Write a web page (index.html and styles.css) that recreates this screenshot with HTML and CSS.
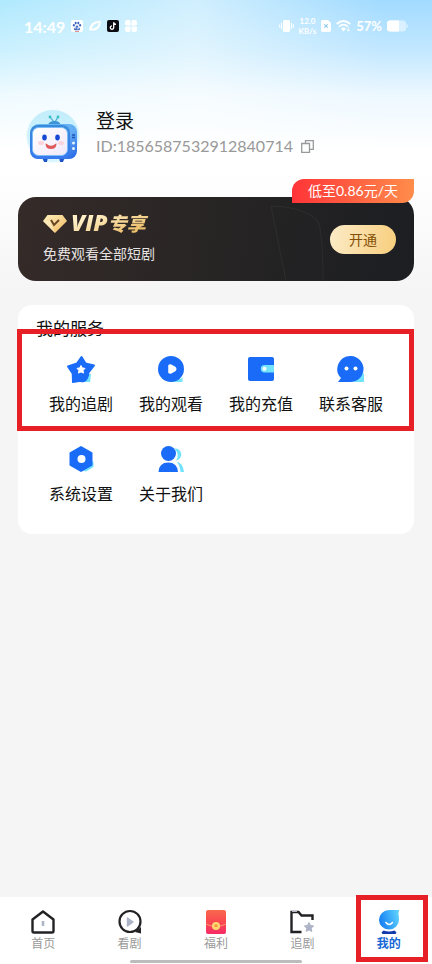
FILE: index.html
```html
<!DOCTYPE html>
<html lang="zh-CN">
<head>
<meta charset="utf-8">
<meta name="viewport" content="width=device-width, initial-scale=1">
<title>我的</title>
<link rel="stylesheet" href="styles.css">
</head>
<body>
<header class="status">
  <div class="group left">
    <span class="time">14:49</span>
    <svg class="app" viewBox="0 0 12 12"><rect width="12" height="12" rx="2" fill="#fff"/><g fill="#3c66bd"><ellipse cx="4.7" cy="3.1" rx="1" ry="1.4"/><ellipse cx="7.3" cy="3.1" rx="1" ry="1.4"/><ellipse cx="2.9" cy="5.3" rx="1" ry="1.3"/><ellipse cx="9.1" cy="5.3" rx="1" ry="1.3"/><path d="M6 4.900c1.400 2.400 3 2.600 3 4.100 0 1.700-1.700 1.300-3 1.300s-3 .4-3-1.300C3 7.500 4.600 7.300 6 4.900z"/></g><path d="M4.700 7v2M6.200 7v2h1.300V7" fill="none" stroke="#fff" stroke-width=".6"/><path d="M4 11.500h4" stroke="#d77" stroke-width=".8"/></svg>
    <svg class="app" viewBox="0 0 12 12"><path d="M.3 10.500C-.5 6 4 1 9 1.200l2.500-.7C12.500 6 8.500 11 3.500 10.500zM3 8.700C7 8.500 9.500 6 10 3 6 3 3 5.500 3 8.700z" fill="#fff" fill-rule="evenodd"/></svg>
    <svg class="app" viewBox="0 0 12 12"><rect width="12" height="12" rx="2" fill="#0b0b12"/><path d="M6.700 2.200v5.400a1.700 1.700 0 1 1-1.700-1.700M6.700 2.300c.2 1.400 1 2 2.300 2.100" fill="none" stroke="#fff" stroke-width="1.300"/></svg>
    <svg class="app" viewBox="0 0 12 12"><path fill="#fff" d="M2 0h2.500Q5.500 0 5.700 5.600 0 5.700 0 4V2Q0 0 2 0zm5.500 0H10q2 0 2 2v2.500q0 1.200-5.600 1.200Q6.300 0 7.500 0zM1.500 6.400h4.200Q5.700 12 4.500 12H2q-2 0-2-2V7.500q0-1.100 1.500-1.100zm5 0H11q1 0 1 1.200V10q0 2-2 2H7.800Q6.500 12 6.500 6.400z"/></svg>
  </div>
  <div class="group">
    <svg class="vibrate" viewBox="0 0 15 14"><rect x="4" y="1" width="7" height="12" rx="1.500" fill="#fff"/><path d="M2.500 4v6M12.500 4v6M.6 5.500v3M14.400 5.500v3" stroke="#fff" stroke-width="1.100"/></svg>
    <span class="speed"><span>12.0</span><span>KB/s</span></span>
    <svg class="sim" viewBox="0 0 10 12"><path d="M2 0h5l3 3v7q0 2-2 2H2q-2 0-2-2V2q0-2 2-2z" fill="#fff"/><path d="M3.300 4.300l3.400 3.400m0-3.400L3.300 7.700" stroke="#8cc8ef" stroke-width="1.100"/></svg>
    <svg class="wifi" viewBox="0 0 15 12"><g fill="none" stroke="#fff" stroke-width="1.700"><path d="M.7 4Q7.500-2 14.300 4M3 6.600q4.500-4 9 0"/></g><path d="M4.900 8.500q2.600-2 5.200 0L7.500 11.500z" fill="#fff"/><path d="M12.300 7.300v3.700m-1.300-1.200 1.300 1.400 1.300-1.400" stroke="#fff" stroke-width=".9" fill="none"/></svg>
    <span class="percent">57%</span>
    <svg class="battery" viewBox="0 0 21 12"><rect y=".5" width="19" height="11" rx="3" fill="#fff" opacity=".5"/><path d="M3 .5h9v11H3q-3 0-3-3v-5q0-3 3-3z" fill="#fff"/><path d="M19.500 4q1.500.3 1.500 2t-1.500 2z" fill="#fff" opacity=".6"/></svg>
  </div>
</header>

<main>
  <section class="profile">
    <svg class="avatar" viewBox="0 0 54 54">
      <defs>
        <linearGradient id="halo" x1="0" y1="0" x2="0" y2="1"><stop stop-color="#c2edfb"/><stop offset="1" stop-color="#d9f5ff"/></linearGradient>
        <linearGradient id="shell" x1="0" y1="0" x2="1" y2="1"><stop stop-color="#68bef4"/><stop offset=".55" stop-color="#65adf4"/><stop offset="1" stop-color="#2162e5"/></linearGradient>
        <linearGradient id="rim" x1="0" y1="0" x2="0" y2="1"><stop stop-color="#398bda"/><stop offset="1" stop-color="#3778ef"/></linearGradient>
        <linearGradient id="screen" x1="0" y1="0" x2="1" y2="1"><stop stop-color="#fff"/><stop offset="1" stop-color="#f0e8fa"/></linearGradient>
      </defs>
      <circle cx="27" cy="27" r="26.500" fill="url(#halo)" stroke="#f0fcff"/>
      <path d="M28 13l-4-5M29 13l3-5" stroke="#48a8cf" stroke-width="1.200"/><circle cx="24" cy="8" r="1.400" fill="#37bcc1"/><circle cx="32" cy="8" r="1.400" fill="#37bcc1"/>
      <path d="M22 16q1-4 6.500-4t6 4z" fill="#3b94d6"/>
      <path d="M16 48h6l-1 5h-3zM33 48h6l-2 5h-3z" fill="#1e55c6"/>
      <rect x="5" y="15" width="46" height="35" rx="8" fill="url(#shell)"/>
      <rect x="4" y="16" width="40" height="34" rx="8" fill="url(#rim)"/>
      <rect x="6.500" y="18.500" width="35" height="28" rx="6" fill="url(#screen)" stroke="#7bbdf8"/>
      <ellipse cx="18.500" cy="28.500" rx="2.300" ry="3" fill="#1548d4"/><ellipse cx="31.500" cy="28.500" rx="2.300" ry="3" fill="#1548d4"/>
      <ellipse cx="15" cy="34" rx="3" ry="2" fill="#fbd3dc"/><ellipse cx="35" cy="34" rx="3" ry="2" fill="#fbd3dc"/>
      <path d="M19.500 34.500q2 .2 2.500 1.500 3 1.500 6 0 .5-1.300 2.500-1.500 0 5.500-5.500 5.500t-5.500-5.500z" fill="#df5a5b"/>
      <path d="M46 26h3M46 28.500h3" stroke="#1d58b8" stroke-width="1.300"/><circle cx="47.500" cy="34" r="1.500" fill="#e3f4ff"/><circle cx="47.500" cy="39.500" r="1.500" fill="#e3f4ff"/>
    </svg>
    <div class="who">
      <button class="login" type="button">登录</button>
      <div class="uid"><span>ID:1856587532912840714</span>
        <button class="copy" type="button" aria-label="复制"><svg viewBox="0 0 13 13"><path d="M4.500 3.500V.7h7.800v8.600H8.500M.7 3.500h7.800v8.800H.7z" fill="none" stroke="#999" stroke-width="1.300"/></svg></button>
      </div>
    </div>
  </section>

  <section class="vip">
    <svg class="shine" viewBox="0 0 60 84"><path d="M16 84L1 9q30 0 46 14 6 8 6 61" fill="none" stroke="#fff" stroke-opacity=".05"/></svg>
    <span class="deal">低至0.86元/天</span>
    <div class="pitch">
      <h2><svg class="gem" viewBox="0 0 24 18"><defs><linearGradient id="gold" x1="0" y1="0" x2="1" y2="1"><stop stop-color="#fff0bd"/><stop offset="1" stop-color="#efb95f"/></linearGradient></defs><path d="M4.500 0h15L24 6 12 18 0 6z" fill="url(#gold)"/><path d="M0 6l7-.5L12 18zM4.500 0L7 5.500" fill="#fff3cf" opacity=".5"/><path d="M8 5l3 5 5-5" fill="none" stroke="#664525" stroke-width="2"/></svg><span class="gold"><b>VIP</b>专享</span></h2>
      <p>免费观看全部短剧</p>
    </div>
    <button class="open" type="button">开通</button>
  </section>

  <section class="services">
    <h3>我的服务</h3>
    <div class="row marked">
      <button class="item" type="button"><svg viewBox="0 0 30 30"><path d="M17 20h8l-1 8h-9z" fill="#72e3fa"/><path d="M15.500 3l4 6.500 8.500 2-5.500 7q-1 7-4.500 8.500-2 .6-3.500-.2L7 28l-.3-8.500L2 12.500l9-3z" fill="#1a6cf8" stroke="#1a6cf8" stroke-width="2" stroke-linejoin="round"/><path d="M15 11.500l1.300 2.400 2.700.5-1.900 2 .4 2.700-2.500-1.200-2.500 1.200.4-2.700-1.900-2 2.700-.5z" fill="#fff" stroke="#fff" stroke-linejoin="round"/></svg>我的追剧</button>
      <button class="item" type="button"><svg viewBox="0 0 30 30"><path d="M15 25h10l1.500-2v5H15z" fill="#72e3fa"/><circle cx="15" cy="15" r="13" fill="#1a6cf8"/><path d="M13 11.500v7l1.500.5 4.500-2.500q1.500-1.500 0-3L14.500 11z" fill="#fff" stroke="#fff" stroke-width="1.500" stroke-linejoin="round"/></svg>我的观看</button>
      <button class="item" type="button"><svg viewBox="0 0 30 30"><rect x="2" y="3" width="26" height="24" rx="2" fill="#1a6cf8"/><path d="M28 11H18.500a3.700 3.700 0 0 0 0 7.400H28z" fill="#72e3fa"/><circle cx="18.500" cy="14.700" r="2" fill="#fff"/></svg>我的充值</button>
      <button class="item" type="button"><svg viewBox="0 0 30 30"><path d="M28 19v9H17z" fill="#72e3fa"/><path d="M15 2a13 13 0 1 1-1 26H2l3-4A13 13 0 0 1 15 2z" fill="#1a6cf8"/><circle cx="10.500" cy="14.500" r="2" fill="#fff"/><circle cx="19.500" cy="14.500" r="2" fill="#fff"/></svg>联系客服</button>
    </div>
    <div class="row">
      <button class="item" type="button"><svg viewBox="0 0 30 30"><path d="M26 17l1.500 1v5L20 27.500l-3-1z" fill="#72e3fa"/><path d="M15 3l10.500 6v12L15 27 4.500 21V9z" fill="#1a6cf8" stroke="#1a6cf8" stroke-width="2" stroke-linejoin="round"/><circle cx="15.500" cy="15" r="4" fill="#fff"/></svg>系统设置</button>
      <button class="item" type="button"><svg viewBox="0 0 30 30"><path d="M18.500 4.500a6 6 0 1 1 1.500 12q4-5.500-1.500-12zM20.500 17.500q6.500 1.500 7.500 10.500h-3.500q-.5-6.500-4-10.500z" fill="#72e3fa"/><circle cx="12.500" cy="9.500" r="7.500" fill="#1a6cf8"/><path d="M2.500 28q.5-9.500 9.700-9.500T22 28z" fill="#1a6cf8"/></svg>关于我们</button>
    </div>
  </section>
</main>

<nav class="tabs">
  <a href="#home"><svg viewBox="0 0 26 26"><path d="M13 2.500l10.500 8V22q0 1.500-1.500 1.500H4q-1.500 0-1.500-1.500V10.500z" fill="none" stroke="#222225" stroke-width="2.400" stroke-linejoin="round"/><path d="M13 12v5" stroke="#adb4c7" stroke-width="2.500"/></svg>首页</a>
  <a href="#watch"><svg viewBox="0 0 26 26"><circle cx="13" cy="12.500" r="10.500" fill="none" stroke="#222225" stroke-width="2.200"/><path d="M24 18v6.500l-6-1.500z" fill="#222225"/><path d="M10.500 9v8l5.500-4z" fill="#adb4c7" stroke="#adb4c7" stroke-width="1.500" stroke-linejoin="round"/></svg>看剧</a>
  <a href="#bonus"><svg viewBox="0 0 26 26"><defs><linearGradient id="packet" x1="0" y1="0" x2="0" y2="1"><stop stop-color="#f8694e"/><stop offset=".55" stop-color="#fb4550"/><stop offset="1" stop-color="#f62c67"/></linearGradient></defs><rect x="3" y="1" width="20" height="24" rx="2" fill="url(#packet)"/><path d="M3 15q10 5 20 0" fill="none" stroke="#ff9b70"/><circle cx="13" cy="17" r="4" fill="#ffda70"/><path d="M11.500 15.500h3v2.500h-3z" fill="#f4923d"/></svg>福利</a>
  <a href="#follow"><svg viewBox="0 0 26 26"><path d="M12.500 23H2.500V3h7l3 3.500h11V11" fill="none" stroke="#222225" stroke-width="2.400"/><path d="M3 2.500h5" stroke="#b4b7c4"/><path d="M20 13.500l1.400 2.900 3.200.5-2.300 2.300.5 3.300-2.800-1.600-2.800 1.600.5-3.300-2.300-2.300 3.200-.5z" fill="#adb4c7" stroke="#adb4c7" stroke-linejoin="round"/></svg>追剧</a>
  <a class="current" href="#mine"><svg viewBox="0 0 26 26"><defs><linearGradient id="drop" x1="0" y1=".6" x2="1" y2=".3"><stop stop-color="#167df5"/><stop offset="1" stop-color="#5bd0fc"/></linearGradient></defs><path d="M13 1h10q0 2-.7 3.500.7 2 .7 6A10 9.800 0 1 1 13 1z" fill="url(#drop)"/><path d="M10 13.500q3 4 6.500 0" fill="none" stroke="#fff" stroke-width="1.600" stroke-linecap="round"/><path d="M7.500 21.500q5.500 1.800 11 0l2 2-1 1.500h-13l-1-1.500z" fill="#1239ad"/></svg>我的</a>
  <span class="handle"></span>
</nav>
</body>
</html>
```

FILE: styles.css
```css
* { box-sizing: border-box; }

body {
  margin: 0;
  min-height: 100vh;
  display: flex;
  flex-direction: column;
  font-family: Lato, "Noto Sans CJK SC", sans-serif;
  color: #111;
  background:
    linear-gradient(rgba(255, 255, 255, 0) 0, rgba(255, 255, 255, .35) 50px, rgba(255, 255, 255, .8) 95px, #fff 150px, #fff 175px, #f5f5f5 290px),
    linear-gradient(90deg, #b0e9fe 0, #d0effe 45%, #a2dbff 88%);
}

svg { display: block; flex: none; }

button {
  padding: 0;
  border: 0;
  background: none;
  color: inherit;
  font: inherit;
}

/* Status bar */
.status {
  display: flex;
  align-items: center;
  justify-content: space-between;
  height: 52px;
  padding: 0 24px;
  color: #fff;
}
.group { display: flex; align-items: center; gap: 5px; }
.group.left { gap: 6px; }
.time { font-size: 16px; font-weight: 700; }
.app { width: 12px; height: 12px; }
.vibrate { width: 15px; height: 14px; }
.speed {
  display: grid;
  font-size: 8px;
  line-height: 10px;
  font-weight: 700;
  text-align: center;
}
.sim { width: 10px; height: 12px; }
.wifi { width: 15px; height: 12px; }
.percent { font-size: 13px; font-weight: 700; }
.battery { width: 21px; height: 12px; }

main { padding: 0 18px; }

/* Profile */
.profile {
  display: flex;
  gap: 16px;
  padding: 57px 8px 34px;
}
.avatar { width: 54px; height: 54px; }
.login { display: block; font-size: 19px; line-height: 24px; }
.uid {
  display: flex;
  align-items: center;
  gap: 8px;
  font-size: 16px;
  line-height: 26px;
  color: #999;
}
.copy svg { width: 13px; height: 13px; }

/* VIP banner */
.vip {
  position: relative;
  display: flex;
  align-items: center;
  justify-content: space-between;
  padding: 12px 18px 12px 25px;
  border-radius: 18px;
  background: linear-gradient(100deg, #352b29, #262424 55%, #1c1e22);
}
.shine { position: absolute; right: 84px; top: 0; width: 60px; height: 84px; }
.deal {
  position: absolute;
  right: 0;
  top: -18px;
  padding: 0 16px;
  border-radius: 12px 0 12px 0;
  background: linear-gradient(90deg, #ff3438, #ff8d4b);
  color: #fff;
  font-size: 14px;
  line-height: 24px;
}
.vip h2 {
  display: flex;
  align-items: center;
  gap: 4px;
  margin: 0;
  font-size: 19px;
  line-height: 30px;
  font-weight: 900;
  font-style: italic;
}
.gem { width: 24px; height: 18px; }
.gold {
  background: linear-gradient(160deg, #fff0c5 25%, #edc06e 75%);
  background-clip: text;
  -webkit-background-clip: text;
  color: transparent;
  padding-right: 4px;
}
.gold b {
  font-family: "Open Sans", sans-serif;
  font-size: 23px;
  line-height: 20px;
  font-weight: 800;
}
.vip p { margin: 0; font-size: 14px; line-height: 30px; color: #e6e2e0; }
.open {
  position: relative;
  padding: 0 19px;
  border-radius: 15px;
  background: linear-gradient(100deg, #fcebc8, #f7ce7c);
  color: #845006;
  font-size: 14px;
  line-height: 29px;
}

/* Services */
.services {
  display: flex;
  flex-direction: column;
  margin-top: 24px;
  padding: 12px 18px 28px;
  border-radius: 14px;
  background: #fff;
}
.services h3 { margin: 0 0 13px; font-size: 17px; line-height: 24px; font-weight: 400; }
.row { position: relative; display: grid; grid-template-columns: repeat(4, 1fr); }
.row + .row { margin-top: 28px; }
.item {
  display: flex;
  flex-direction: column;
  align-items: center;
  gap: 8px;
  font-size: 16px;
  line-height: 24px;
}
.item svg { width: 30px; height: 30px; }

/* Red highlight frames */
.marked::after,
.current::after {
  content: "";
  position: absolute;
  border: 5px solid #e71f27;
  pointer-events: none;
}
.marked::after { inset: -25px -18px -15px -19px; }
.current::after { inset: -2px 4px 2px 10px; }

/* Tab bar */
.tabs {
  position: relative;
  display: grid;
  grid-template-columns: repeat(5, 1fr);
  margin-top: auto;
  background: #fff;
}
.tabs a {
  position: relative;
  display: flex;
  flex-direction: column;
  align-items: center;
  gap: 1px;
  padding: 12px 0;
  color: #999;
  font-size: 12px;
  line-height: 16px;
  text-decoration: none;
}
.tabs svg { width: 26px; height: 26px; }
.tabs .current { color: #1667d6; font-weight: 700; }
.handle {
  position: absolute;
  left: 30%;
  right: 30%;
  bottom: 1px;
  height: 3px;
  border-radius: 2px;
  background: #bcbcbc;
}
```
